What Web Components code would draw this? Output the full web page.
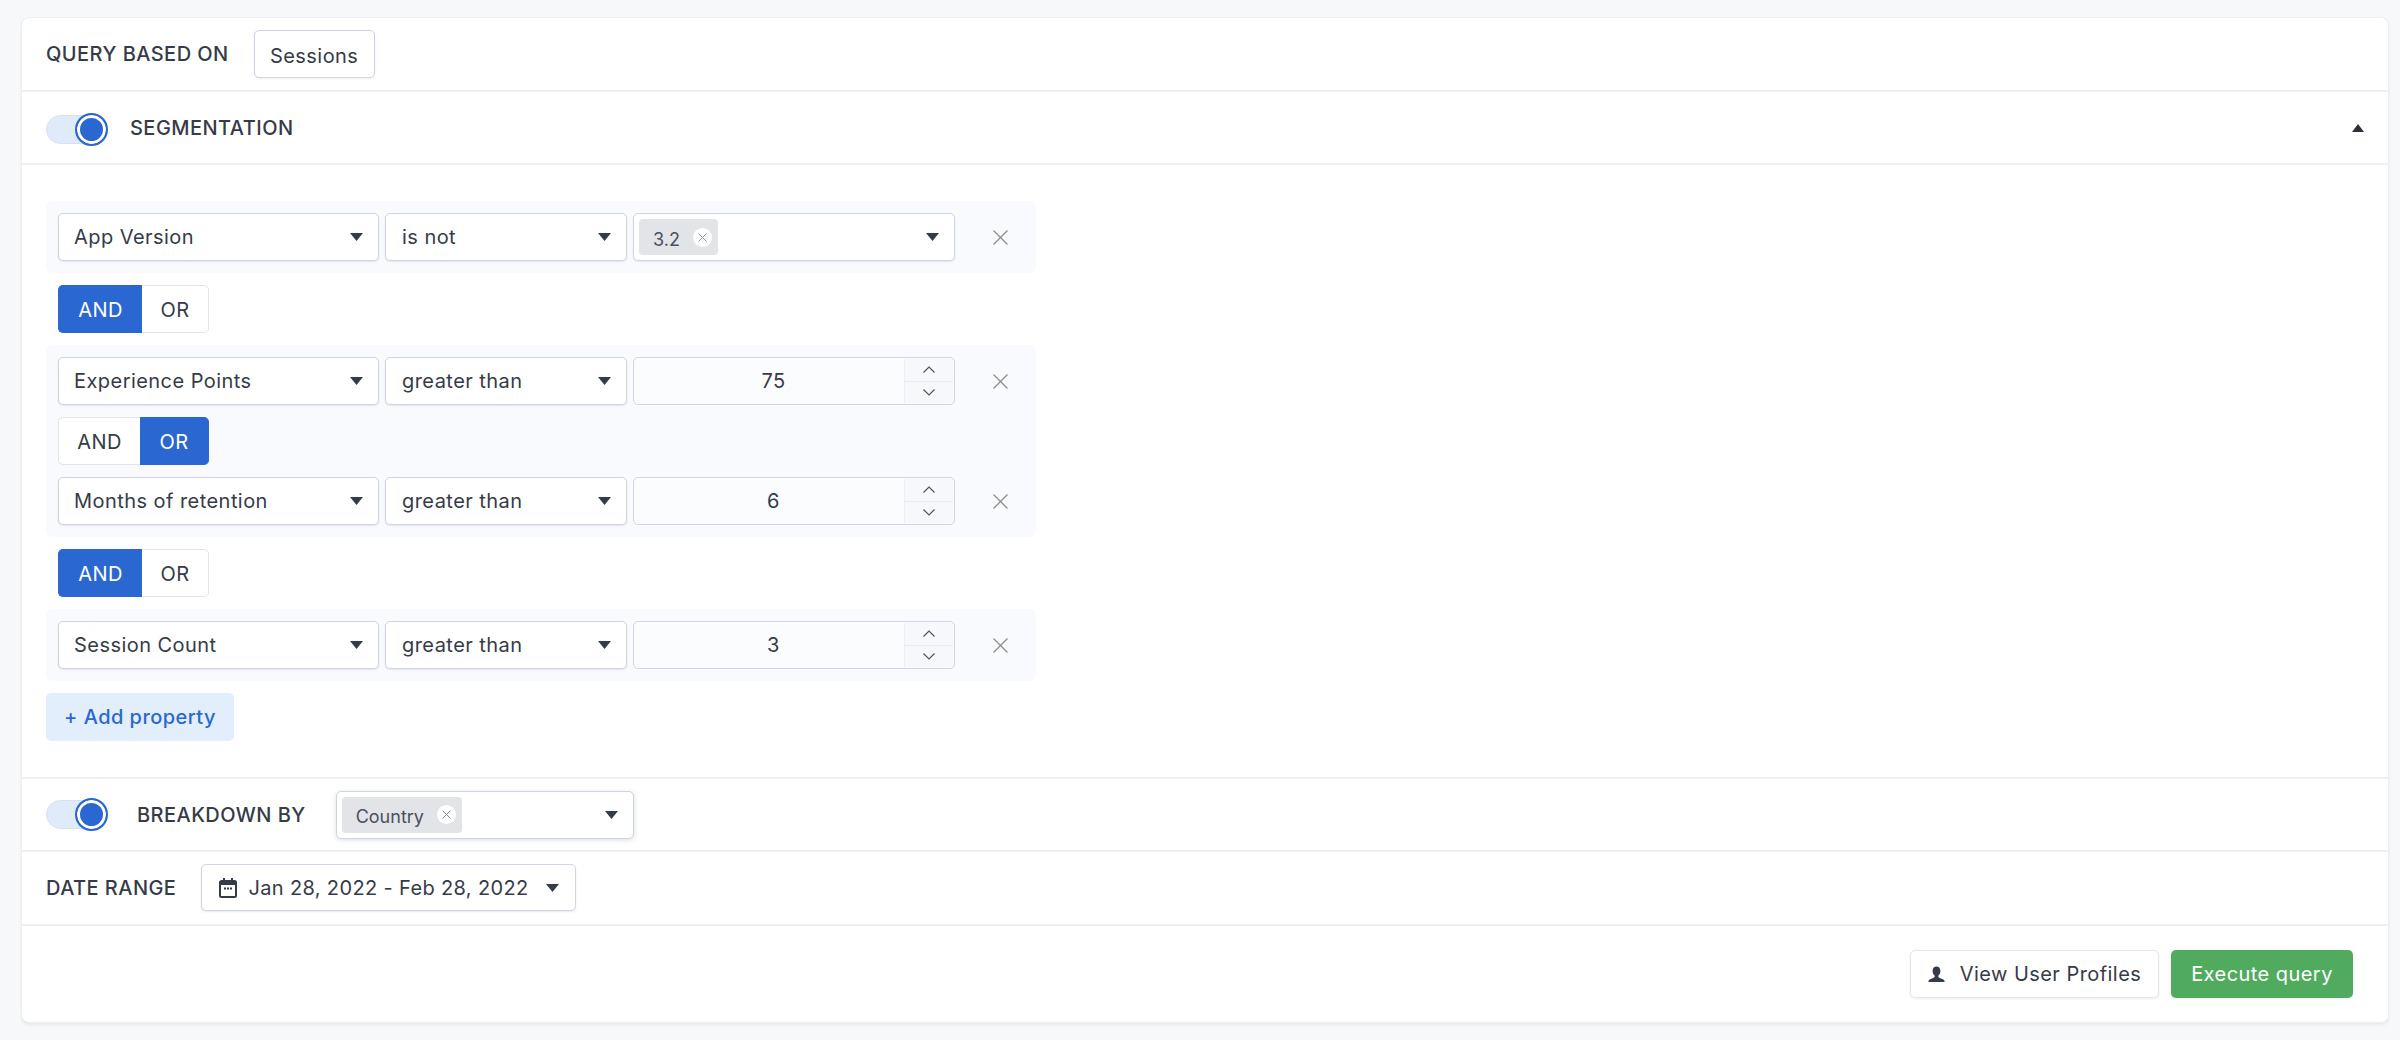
<!DOCTYPE html>
<html lang="en">
<head>
<meta charset="utf-8">
<title>Query builder</title>
<style>
    html, body { margin: 0; height: 100%; }
    body {
        background: #f7f8fa;
        color: #353b48;
        font-family: Inter, "Noto Sans", sans-serif;
        font-size: 20px;
        letter-spacing: .45px;
    }
    .page { padding: 17px 11px 17px 21px; }
</style>
</head>
<body>
<div class="page">
    <query-card>
        <query-section height="74">
            <query-label gap="25">QUERY BASED ON</query-label>
            <query-button width="121" style="padding-top:3px">Sessions</query-button>
        </query-section>
        <query-section height="73">
            <query-toggle style="margin-top:3px"></query-toggle>
            <query-label start="23">SEGMENTATION</query-label>
            <svg slot="end" width="12" height="8" viewBox="0 0 12 8"><path d="M6 0l6 8H0z" fill="#2b2f38"/></svg>
        </query-section>
        <query-section block padding="36px 24px 0" height="614">
            <query-filter>
                <query-line>
                    <query-select width="321" text="App Version"></query-select>
                    <query-select width="242" pad="16" text="is not"></query-select>
                    <query-select width="322" pad="5"><query-chip>3.2</query-chip></query-select>
                </query-line>
            </query-filter>
            <query-andor active="and"></query-andor>
            <query-filter>
                <query-line>
                    <query-select width="321" text="Experience Points"></query-select>
                    <query-select width="242" pad="16" text="greater than"></query-select>
                    <query-number value="75"></query-number>
                </query-line>
                <query-andor active="or" inner></query-andor>
                <query-line>
                    <query-select width="321" text="Months of retention"></query-select>
                    <query-select width="242" pad="16" text="greater than"></query-select>
                    <query-number value="6"></query-number>
                </query-line>
            </query-filter>
            <query-andor active="and"></query-andor>
            <query-filter>
                <query-line>
                    <query-select width="321" text="Session Count"></query-select>
                    <query-select width="242" pad="16" text="greater than"></query-select>
                    <query-number value="3"></query-number>
                </query-line>
            </query-filter>
            <query-add>+ Add property</query-add>
        </query-section>
        <query-section height="73">
            <query-toggle></query-toggle>
            <query-label start="30" gap="30">BREAKDOWN BY</query-label>
            <query-select width="298" pad="5" raised><query-chip>Country</query-chip></query-select>
        </query-section>
        <query-section height="74" padding="0 24px 1px">
            <query-label gap="25">DATE RANGE</query-label>
            <query-date>Jan 28, 2022 - Feb 28, 2022</query-date>
        </query-section>
        <query-section height="96" last padding="0 35px 0 24px">
            <query-button slot="end" width="249" soft>
                <svg width="17" height="17" viewBox="0 0 17 17" style="margin-right:15px"><path d="M8.5 0.5c2.5 0 3.900 1.900 3.900 4.400 0 1.900-.8 3.700-2 4.600v1.300c0 .6 1 1.100 2.600 1.700 1.700.7 3.500 1.300 3.500 2.500v1H.5v-1c0-1.200 1.800-1.800 3.500-2.500 1.600-.6 2.600-1.100 2.600-1.700V9.500c-1.200-.9-2-2.700-2-4.600C4.600 2.400 6 .5 8.500.5z" fill="#353b48"/></svg>View User Profiles
            </query-button>
            <query-button slot="end" width="182" primary>Execute query</query-button>
        </query-section>
    </query-card>
</div>

<script>
const caret = `<svg width="13" height="8" viewBox="0 0 13 8"><path d="M0 0h13L6.500 8z" fill="#353b48"/></svg>`;

class QueryCard extends HTMLElement {
    connectedCallback() {
        this.attachShadow({ mode: "open" }).innerHTML = `
        <style>
            :host {
                display: block;
                width: 2368px;
                box-sizing: border-box;
                background: #fff;
                border: 1px solid #eceef1;
                border-radius: 8px;
                box-shadow: 0 2px 3px rgba(30, 40, 60, .07);
            }
        </style>
        <slot></slot>`;
    }
}

class QuerySection extends HTMLElement {
    connectedCallback() {
        const h = this.getAttribute("height");
        const block = this.hasAttribute("block");
        const last = this.hasAttribute("last");
        this.attachShadow({ mode: "open" }).innerHTML = `
        <style>
            :host {
                display: ${block ? "block" : "flex"};
                align-items: center;
                box-sizing: border-box;
                height: ${h}px;
                padding: ${this.getAttribute("padding") || "0 24px"};
                border-bottom: ${last ? "0" : "2px solid #eeeff2"};
            }
            .end { margin-left: auto; display: flex; align-items: center; gap: 12px; }
        </style>
        <slot></slot><div class="end"><slot name="end"></slot></div>`;
    }
}

class QueryLabel extends HTMLElement {
    connectedCallback() {
        this.attachShadow({ mode: "open" }).innerHTML = `
        <style>
            :host {
                display: block;
                font-weight: 500;
                font-size: 20px;
                color: #353b48;
                margin-left: ${this.getAttribute("start") || 0}px;
                margin-right: ${this.getAttribute("gap") || 0}px;
            }
        </style>
        <slot></slot>`;
    }
}

class QueryButton extends HTMLElement {
    connectedCallback() {
        const primary = this.hasAttribute("primary");
        const soft = this.hasAttribute("soft");
        this.attachShadow({ mode: "open" }).innerHTML = `
        <style>
            :host {
                display: flex;
                align-items: center;
                justify-content: center;
                box-sizing: border-box;
                width: ${this.getAttribute("width")}px;
                height: 48px;
                border-radius: 5px;
                font-size: 20px;
                background: ${primary ? "#51ab5f" : "#fff"};
                color: ${primary ? "#fff" : "#353b48"};
                border: ${primary ? "0" : soft ? "1px solid #e4e5e9" : "1px solid #cfd4e4"};
                box-shadow: 0 1px 3px rgba(30, 40, 60, .08);
            }
        </style>
        <slot></slot>`;
    }
}

class QueryToggle extends HTMLElement {
    connectedCallback() {
        this.attachShadow({ mode: "open" }).innerHTML = `
        <style>
            :host {
                display: block;
                position: relative;
                width: 61px;
                height: 29px;
                box-sizing: border-box;
                background: #dfeafb;
                border: 1px solid #d8e2f3;
                border-radius: 15px;
            }
            .thumb {
                position: absolute;
                top: -3px;
                right: -2px;
                width: 33px;
                height: 33px;
                box-sizing: border-box;
                border-radius: 50%;
                background: #2b67d1;
                border: 2px solid #2b67d1;
                box-shadow: inset 0 0 0 3px #fff;
            }
        </style>
        <div class="thumb"></div>`;
    }
}

class QuerySelect extends HTMLElement {
    connectedCallback() {
        const text = this.getAttribute("text");
        const raised = this.hasAttribute("raised");
        const pad = this.getAttribute("pad") || 15;
        this.attachShadow({ mode: "open" }).innerHTML = `
        <style>
            :host {
                display: flex;
                align-items: center;
                box-sizing: border-box;
                width: ${this.getAttribute("width")}px;
                height: 48px;
                padding: 0 15px 0 ${pad}px;
                background: #fff;
                border: 1px solid #cfd4e4;
                border-radius: 5px;
                font-size: 20px;
                color: #353b48;
                box-shadow: 0 1px ${raised ? 5 : 2}px rgba(40, 50, 90, ${raised ? .16 : .1});
            }
            .text { flex: 1; white-space: nowrap; }
            .caret { display: flex; }
        </style>
        <div class="text">${text || "<slot></slot>"}</div>
        <div class="caret">${caret}</div>`;
    }
}

class QueryChip extends HTMLElement {
    connectedCallback() {
        this.attachShadow({ mode: "open" }).innerHTML = `
        <style>
            :host {
                display: inline-flex;
                align-items: center;
                box-sizing: border-box;
                height: 36px;
                padding: 0 6px 0 14px;
                gap: 13px;
                background: #e3e4e8;
                border-radius: 4px;
                font-size: 18px;
                letter-spacing: 0;
                color: #4a505c;
                vertical-align: middle;
            }
            .label { padding-top: 4px; }
            .x {
                width: 19px;
                height: 19px;
                border-radius: 50%;
                background: #fff;
                display: flex;
                align-items: center;
                justify-content: center;
            }
        </style>
        <span class="label"><slot></slot></span>
        <span class="x"><svg width="9" height="9" viewBox="0 0 9 9"><path d="M.5.500l8 8M8.500.5l-8 8" stroke="#8e929a" stroke-width="1"/></svg></span>`;
    }
}

class QueryNumber extends HTMLElement {
    connectedCallback() {
        this.attachShadow({ mode: "open" }).innerHTML = `
        <style>
            :host {
                display: flex;
                box-sizing: border-box;
                width: 322px;
                height: 48px;
                background: #fbfcfe;
                border: 1px solid #cfd4e4;
                border-radius: 5px;
                font-size: 20px;
                color: #353b48;
            }
            .value { flex: 1; display: flex; align-items: center; justify-content: center; padding-left: 10px; }
            .steps {
                width: 48px;
                margin: 1px;
                background: #f7f8fb;
                border-left: 1px solid #eceef3;
                display: flex;
                flex-direction: column;
                border-radius: 0 4px 4px 0;
            }
            .steps div { flex: 1; display: flex; align-items: center; justify-content: center; }
            .steps div + div { border-top: 1px solid #e9ebf0; }
        </style>
        <div class="value">${this.getAttribute("value")}</div>
        <div class="steps">
            <div><svg width="12" height="7" viewBox="0 0 12 7"><path d="M.5 6.500L6 1l5.500 5.500" fill="none" stroke="#4a4f5a" stroke-width="1.100"/></svg></div>
            <div><svg width="12" height="7" viewBox="0 0 12 7"><path d="M.5.500L6 6l5.500-5.500" fill="none" stroke="#4a4f5a" stroke-width="1.100"/></svg></div>
        </div>`;
    }
}

class QueryLine extends HTMLElement {
    connectedCallback() {
        this.attachShadow({ mode: "open" }).innerHTML = `
        <style>
            :host { display: flex; gap: 6px; align-items: center; }
            .close { margin-left: 32px; display: flex; }
        </style>
        <slot></slot>
        <div class="close"><svg width="15" height="15" viewBox="0 0 15 15"><path d="M.5.500l14 14M14.500.5l-14 14" stroke="#8a8d94" stroke-width="1.300"/></svg></div>`;
    }
}

class QueryFilter extends HTMLElement {
    connectedCallback() {
        this.attachShadow({ mode: "open" }).innerHTML = `
        <style>
            :host {
                display: block;
                width: 990px;
                box-sizing: border-box;
                padding: 12px;
                background: #f9fafd;
                border-radius: 6px;
            }
        </style>
        <slot></slot>`;
    }
}

class QueryAndOr extends HTMLElement {
    connectedCallback() {
        const active = this.getAttribute("active");
        const inner = this.hasAttribute("inner");
        const andWidth = active === "and" ? 84 : 82;
        this.attachShadow({ mode: "open" }).innerHTML = `
        <style>
            :host {
                display: flex;
                width: 151px;
                margin: ${inner ? "12px 0" : "12px 0 12px 12px"};
                font-size: 20px;
            }
            div {
                box-sizing: border-box;
                height: 48px;
                padding-top: 1px;
                display: flex;
                align-items: center;
                justify-content: center;
                background: #fff;
                color: #353b48;
                border: 1px solid #e4e5e9;
            }
            .and { width: ${andWidth}px; border-radius: 5px 0 0 5px; border-right: 0; }
            .or { width: ${151 - andWidth}px; border-radius: 0 5px 5px 0; border-left: 0; }
            .on { background: #2b67d1; color: #fff; border-color: #2b67d1; }
        </style>
        <div class="and ${active === "and" ? "on" : ""}">AND</div>
        <div class="or ${active === "or" ? "on" : ""}">OR</div>`;
    }
}

class QueryAdd extends HTMLElement {
    connectedCallback() {
        this.attachShadow({ mode: "open" }).innerHTML = `
        <style>
            :host {
                display: flex;
                align-items: center;
                justify-content: center;
                box-sizing: border-box;
                width: 188px;
                height: 48px;
                margin-top: 12px;
                background: #e3eefc;
                color: #2b67d1;
                border-radius: 5px;
                font-size: 20px;
                font-weight: 500;
            }
        </style>
        <slot></slot>`;
    }
}

class QueryDate extends HTMLElement {
    connectedCallback() {
        this.attachShadow({ mode: "open" }).innerHTML = `
        <style>
            :host {
                display: flex;
                align-items: center;
                box-sizing: border-box;
                width: 375px;
                height: 47px;
                padding: 0 16px 0 17px;
                background: #fff;
                border: 1px solid #cfd4e4;
                border-radius: 5px;
                font-size: 20px;
                letter-spacing: .36px;
                color: #353b48;
                box-shadow: 0 1px 2px rgba(40, 50, 90, .1);
            }
            .text { flex: 1; margin-left: 11px; white-space: nowrap; }
            .caret { display: flex; }
        </style>
        <svg width="18" height="20" viewBox="0 0 18 20">
            <path d="M1 4.500a1.500 1.500 0 0 1 1.500-1.500h13A1.500 1.500 0 0 1 17 4.500v13a1.500 1.500 0 0 1-1.500 1.500h-13A1.500 1.500 0 0 1 1 17.500z" fill="none" stroke="#353b48" stroke-width="2"/>
            <path d="M1 3h16v4H1zM4 0h2v4H4zM12 0h2v4h-2zM5 9.500h2v2H5zM8 9.500h2v2H8zM11 9.500h2v2h-2z" fill="#353b48"/>
        </svg>
        <div class="text"><slot></slot></div>
        <div class="caret">${caret}</div>`;
    }
}

customElements.define("query-card", QueryCard);
customElements.define("query-section", QuerySection);
customElements.define("query-label", QueryLabel);
customElements.define("query-button", QueryButton);
customElements.define("query-toggle", QueryToggle);
customElements.define("query-select", QuerySelect);
customElements.define("query-chip", QueryChip);
customElements.define("query-number", QueryNumber);
customElements.define("query-line", QueryLine);
customElements.define("query-filter", QueryFilter);
customElements.define("query-andor", QueryAndOr);
customElements.define("query-add", QueryAdd);
customElements.define("query-date", QueryDate);
</script>
</body>
</html>
